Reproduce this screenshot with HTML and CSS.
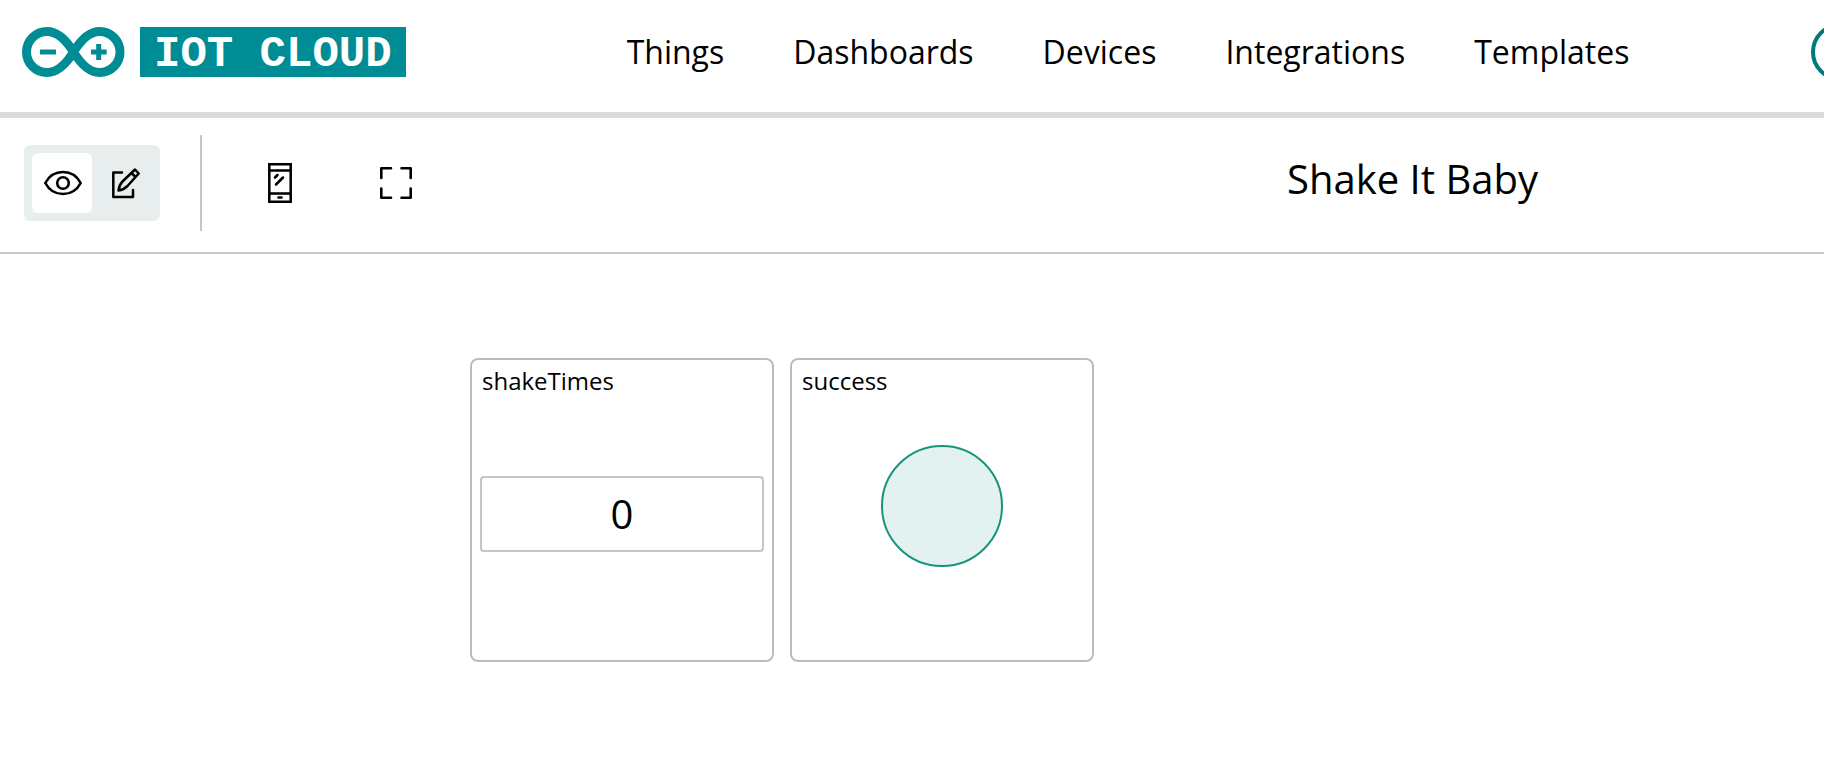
FILE: index.html
```html
<!DOCTYPE html>
<html lang="en">
<head>
<meta charset="utf-8">
<title>Shake It Baby - IoT Cloud</title>
<link rel="stylesheet" href="styles.css">
</head>
<body>
<header class="header">
  <a class="brand" href="#">
    <svg class="brand-mark" viewBox="0 0 104 50" width="104" height="50" aria-hidden="true">
      <path d="M51.500 25C43.500 12 35.500 4.500 25 4.500a20.500 20.500 0 0 0 0 41C35.500 45.500 43.500 38 51.500 25C59.500 12 67.500 4.500 77.500 4.500a20.500 20.500 0 0 1 0 41C67.500 45.500 59.500 38 51.500 25Z" fill="none" stroke="#008C94" stroke-width="9"/>
      <path d="M18 22.500h16v5h-16zM69 22.500h5.200v-5.500h5v5.500h5.500v5h-5.500v5.500h-5v-5.500h-5.200z" fill="#008C94"/>
    </svg>
    <span class="brand-name">IOT CLOUD</span>
  </a>
  <nav class="nav">
    <a href="#">Things</a>
    <a href="#">Dashboards</a>
    <a href="#">Devices</a>
    <a href="#">Integrations</a>
    <a href="#">Templates</a>
  </nav>
  <button class="account" type="button" aria-label="Account"></button>
</header>
<section class="toolbar">
  <div class="modes">
    <button class="mode mode-active" type="button" aria-label="View">
      <svg viewBox="0 0 40 28" width="40" height="28" fill="none" stroke="#000" stroke-width="2.600"><path d="M3.300 14C7 7 13.500 3 21 3s14 4 17.700 11C35 21 28.500 25 21 25S7 21 3.300 14Z"/><circle cx="21" cy="14" r="5.800"/></svg>
    </button>
    <button class="mode" type="button" aria-label="Edit">
      <svg viewBox="-4 0 36 32" width="36" height="32" fill="none" stroke="#000" stroke-width="2.500" stroke-linejoin="round" stroke-linecap="round"><path d="M14 5.500H5.300V30H25V23"/><path d="M10.500 23.500C11 20 12 17 14.500 14.500L27 2.500L30.700 6.500L19.500 19C17 21.500 14 23 10.500 23.500ZM23.500 6L27.500 10"/></svg>
    </button>
  </div>
  <div class="tools">
    <button class="tool" type="button" aria-label="Mobile layout">
      <svg viewBox="0 0 26 42" width="26" height="42" fill="none" stroke="#000" stroke-width="2.500"><path d="M2.300 2.300H23.700V39.700H2.300ZM2.300 8.500H23.700M2.300 31.500H23.700"/><path d="M8 15.500L10.500 13M9 22.500L16 15.500M11.500 35.500H14.500" stroke-linecap="round"/></svg>
    </button>
    <button class="tool" type="button" aria-label="Full screen">
      <svg viewBox="0 0 34 34" width="34" height="34" fill="none" stroke="#000" stroke-width="2.600" stroke-linecap="round" stroke-linejoin="round"><path d="M2.300 12V2.300H12M22.500 2.300H31.700V12M31.700 22.500V31.700H22.500M12 31.700H2.300V22.500"/></svg>
    </button>
  </div>
  <h1 class="title">Shake It Baby</h1>
</section>
<main class="board">
  <section class="widget">
    <label class="widget-name" for="shake">shakeTimes</label>
    <div class="widget-body"><input class="value" id="shake" type="text" value="0"></div>
  </section>
  <section class="widget">
    <h2 class="widget-name">success</h2>
    <div class="widget-body widget-status"><span class="led" role="img" aria-label="Off"></span></div>
  </section>
</main>
</body>
</html>
```
FILE: styles.css
```css
* {
  box-sizing: border-box;
}

body {
  margin: 0;
  background: #fff;
  color: #000;
  font-family: "Open Sans", "Noto Sans", sans-serif;
  overflow-x: hidden;
}

button {
  padding: 0;
  border: 0;
  background: none;
  display: grid;
  place-items: center;
}

.header {
  display: flex;
  align-items: center;
  height: 118px;
  padding: 0 0 8px 22px;
  border-bottom: 6px solid #dbdbdb;
  overflow: hidden;
}

.brand {
  display: flex;
  flex: none;
  gap: 14px;
  text-decoration: none;
}

.brand-name {
  height: 50px;
  padding: 2px 14px 0;
  background: #008c94;
  color: #fff;
  font: bold 44px/50px "Liberation Mono", monospace;
}

.nav {
  display: flex;
  flex: none;
  gap: 69px;
  margin-left: 221px;
}

.nav a {
  color: #000;
  font-size: 32px;
  line-height: 44px;
  text-decoration: none;
}

.account {
  flex: none;
  width: 58px;
  height: 58px;
  margin-left: auto;
  margin-right: -45px;
  border: 4px solid #00797b;
  border-radius: 50%;
}

.toolbar {
  display: flex;
  align-items: center;
  height: 136px;
  padding: 0 0 4px 24px;
  border-bottom: 2px solid #c3cccf;
}

.modes {
  display: flex;
  padding: 8px;
  border-radius: 6px;
  background: #e8eeee;
}

.mode {
  width: 60px;
  height: 60px;
  border-radius: 6px;
}

.mode-active {
  background: #fff;
}

.tools {
  display: flex;
  align-items: center;
  gap: 86px;
  height: 96px;
  margin-left: 40px;
  padding-left: 65px;
  border-left: 2px solid #bdc9c9;
}

.title {
  flex: 1;
  margin: 0;
  padding: 0 0 8px 588px;
  text-align: center;
  font-size: 40px;
  font-weight: 400;
  line-height: 56px;
}

.board {
  display: flex;
  gap: 16px;
  padding: 104px 0 104px 470px;
}

.widget {
  display: flex;
  flex-direction: column;
  width: 304px;
  height: 304px;
  padding: 5px 8px;
  border: 2px solid #b3bfc0;
  border-radius: 8px;
}

.widget-name {
  margin: 0;
  padding: 0 2px;
  font-size: 24px;
  font-weight: 400;
  line-height: 32px;
}

.widget-body {
  display: grid;
  flex: 1;
  align-items: center;
  padding-bottom: 24px;
}

.widget-status {
  justify-items: center;
  padding-bottom: 40px;
}

.value {
  width: 100%;
  height: 76px;
  padding: 0 0 2px;
  border: 2px solid #bdc9c9;
  border-radius: 4px;
  background: #fff;
  color: #000;
  font: 40px "Open Sans", "Noto Sans", sans-serif;
  text-align: center;
}

.led {
  width: 122px;
  height: 122px;
  border: 2px solid #16957b;
  border-radius: 50%;
  background: #e4f1f1;
}
```
